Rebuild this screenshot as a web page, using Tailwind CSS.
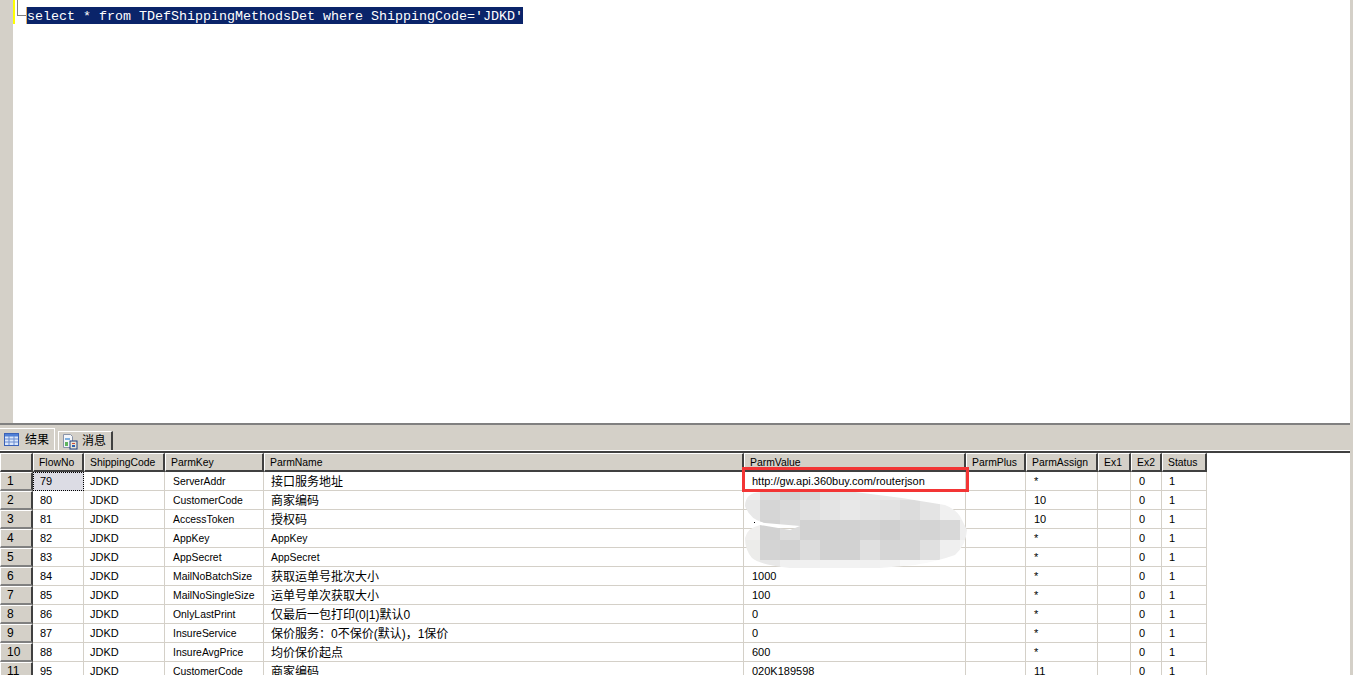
<!DOCTYPE html>
<html lang="en">
<head>
  <meta charset="UTF-8" />
  <title>Query</title>
  <script src="https://cdn.jsdelivr.net/npm/@tailwindcss/browser@4"></script>
</head>
<body class="bg-[#d4d0c8] overflow-hidden">
<div class="relative flex flex-col h-[675px] w-[1350px] bg-white overflow-hidden font-['Liberation_Sans','Noto_Sans_CJK_SC',sans-serif] text-[11px] text-black">

  <!-- Editor -->
  <div class="flex h-[423px] shrink-0">
    <div class="w-[13px] bg-[#d4d0c8] shrink-0"></div>
    <div class="w-[2px] h-[24px] bg-[#ffff00] shrink-0"></div>
    <div class="w-[2px] shrink-0"></div>
    <div class="w-[9px] h-[16px] border-l border-b border-[#808080] shrink-0"></div>
    <div class="w-px h-[17px] mt-[7px] bg-[#e8b060] shrink-0"></div>
    <div class="grow pt-[7px]">
      <div class="w-fit h-[17px] bg-[#0a246a] text-white font-['Liberation_Mono',monospace] text-[13.33px] leading-[19px] whitespace-pre overflow-hidden">select * from TDefShippingMethodsDet where ShippingCode='JDKD'</div>
    </div>
  </div>

  <!-- Tabs -->
  <div class="flex items-end h-[28px] shrink-0 gap-[3px] bg-[#d4d0c8] border-t-2 border-[#808080] border-b border-b-white">
    <div class="flex items-center gap-[6px] w-[55px] h-[22px] pl-[4px] bg-[#d4d0c8] border-t border-r border-white text-[12px] text-black">
      <svg width="15" height="13" viewBox="0 0 15 13" class="shrink-0">
        <rect x="0.5" y="0.5" width="14" height="12" fill="#dbe8fb" stroke="#3a62b8" />
        <rect x="1" y="1" width="13" height="2.5" fill="#4f7fd6" />
        <path d="M5 3v9M10 3v9M1 6h13M1 9h13" stroke="#6a8cd0" stroke-width="1" fill="none" />
      </svg>
      <span>结果</span>
    </div>
    <div class="flex items-center gap-[3px] w-[55px] h-[19px] pl-[3px] border-l border-t border-white border-r-2 border-r-[#404040] text-[12px] text-black">
      <svg width="17" height="17" viewBox="0 0 17 17" class="shrink-0">
        <path d="M1.5 1.5h7l2 2v11h-9z" fill="#f4f6fa" stroke="#8a94a8" />
        <rect x="3" y="5" width="5" height="2" fill="#7fb0e0" />
        <rect x="3" y="9" width="3" height="4" fill="#5fb45f" />
        <rect x="8" y="8" width="7" height="8" fill="#e9e4d4" stroke="#1f3f80" />
        <rect x="10" y="10" width="3" height="1" fill="#d04a3a" />
        <rect x="10" y="12" width="3" height="2" fill="#2f5fb0" />
      </svg>
      <span>消息</span>
    </div>
  </div>

  <!-- Results grid -->
  <div class="grow border-t-2 border-[#404040]" id="grid"></div>

  <!-- Red annotation around the URL -->
  <div class="absolute left-[742px] top-[467px] w-[227px] h-[25px] border-[3px] border-[#f33535]"></div>

  <!-- Mosaic over the secrets -->
  <svg class="absolute left-0 top-0" width="1350" height="675" viewBox="0 0 1350 675">
    <defs>
      <clipPath id="blob">
        <path d="M745 506Q745 493 760 492L855 492Q900 497 945 505Q958 510 962 520L967 530Q966 545 955 555Q935 562 915 565L880 568L790 568Q760 565 752 558Q745 550 745 538Q747 528 760 525L790 530L800 526L765 523Q750 520 745 506Z" />
      </clipPath>
    </defs>
    <g id="mosaic" clip-path="url(#blob)"></g>
    <rect x="754" y="522" width="1" height="1" fill="#000" />
  </svg>
</div>

<script>
const columns = ['FlowNo', 'ShippingCode', 'ParmKey', 'ParmName', 'ParmValue', 'ParmPlus', 'ParmAssign', 'Ex1', 'Ex2', 'Status'];
const rows = [
  ['79', 'JDKD', 'ServerAddr', '接口服务地址', 'http://gw.api.360buy.com/routerjson', '', '*', '', '0', '1'],
  ['80', 'JDKD', 'CustomerCode', '商家编码', '', '', '10', '', '0', '1'],
  ['81', 'JDKD', 'AccessToken', '授权码', '', '', '10', '', '0', '1'],
  ['82', 'JDKD', 'AppKey', 'AppKey', '', '', '*', '', '0', '1'],
  ['83', 'JDKD', 'AppSecret', 'AppSecret', '', '', '*', '', '0', '1'],
  ['84', 'JDKD', 'MailNoBatchSize', '获取运单号批次大小', '1000', '', '*', '', '0', '1'],
  ['85', 'JDKD', 'MailNoSingleSize', '运单号单次获取大小', '100', '', '*', '', '0', '1'],
  ['86', 'JDKD', 'OnlyLastPrint', '仅最后一包打印(0|1)默认0', '0', '', '*', '', '0', '1'],
  ['87', 'JDKD', 'InsureService', '保价服务：0不保价(默认)，1保价', '0', '', '*', '', '0', '1'],
  ['88', 'JDKD', 'InsureAvgPrice', '均价保价起点', '600', '', '*', '', '0', '1'],
  ['95', 'JDKD', 'CustomerCode', '商家编码', '020K189598', '', '11', '', '0', '1']
];

const gridCols = 'grid w-fit grid-cols-[33px_51px_81px_99px_480px_222px_60px_72px_33px_31px_45px]';
const headBtn = 'h-[19px] bg-[#d4d0c8] border-t border-l border-white border-r-2 border-b-2 border-r-[#404040] border-b-[#404040] pl-[5px] text-[10.4px] leading-[18px]';
const cellBase = 'h-[19px] border-r border-b border-[#d4d0c8] whitespace-nowrap overflow-hidden ';
// left padding per column, the reference isn't uniform
const padding = ['pl-[7px]', 'pl-[6px]', 'pl-[8px]', 'pl-[7px]', 'pl-[8px]', 'pl-[7px]', 'pl-[8px]', 'pl-[7px]', 'pl-[8px]', 'pl-[7px]'];

const textClass = (val) => {
  if (/[^\x00-\x7f]/.test(val)) return 'text-[12px] leading-[20px]';
  if (/[a-z]/.test(val) && !val.startsWith('http')) return 'text-[10.4px] leading-[20px]';
  return 'text-[11px] leading-[18px]';
};

let html = `<div class="${gridCols}"><div class="${headBtn}"></div>`;
columns.forEach(name => { html += `<div class="${headBtn}">${name}</div>`; });
rows.forEach((row, i) => {
  html += `<div class="h-[19px] bg-[#d4d0c8] border-t border-l border-white border-r-2 border-b-2 border-r-[#404040] border-b-[#808080] pl-[6px] text-[12px] leading-[16px]">${i + 1}</div>`;
  row.forEach((val, j) => {
    if (i === 0 && j === 0) {
      html += `<div class="h-[19px] bg-[#dcdce4] border border-dotted border-black pl-[6px] leading-[17px]">${val}</div>`;
    } else {
      html += `<div class="${cellBase}${padding[j]} ${textClass(val)}">${val}</div>`;
    }
  });
});
document.getElementById('grid').innerHTML = html + '</div>';

// mosaic tile greys, 20px wide from x=740
const tiles = [
  ['#ededed', '#dcdcdc', '#d2d2d2', '#d8d8d8', '#e4e4e4', '#e6e6e6', '#e6e6e6', '#e8e8e8', '#e8e8e8', '#e6e6e6', '#e6e6e6', '#f0f0f0'],
  ['#e8e8e8', '#d6d6d6', '#dadada', '#e0e0e0', '#e4e4e4', '#e8e8e8', '#e4e4e4', '#e2e2e2', '#dcdcdc', '#e4e4e4', '#f0f0f0', '#f2f2f2'],
  ['#f0efee', '#d2d2d2', '#dcdcdc', '#d2d2d2', '#d2d2d2', '#d2d2d2', '#d4d4d4', '#d0d0d0', '#d6d6d6', '#d4d4d4', '#d8d8d8', '#eeeeee'],
  ['#ececea', '#d4d4d4', '#d2d2d2', '#dcdcdc', '#d2d2d2', '#d2d2d2', '#e0e0e0', '#d6d6d6', '#d6d6d6', '#e0e0e0', '#efefef', '#f4f4f4'],
  ['#ececea', '#e8e8e8', '#f0f0f0', '#f0f0f0', '#f2f2f2', '#f2f2f2', '#f0f0f0', '#f2f2f2', '#f8f8f8', '#fafafa', '#fafafa', '#fafafa']
];
const tileY = [490, 500, 520, 540, 560];
const tileH = [10, 20, 20, 20, 10];
let svg = '';
tiles.forEach((line, r) => line.forEach((fill, c) => {
  svg += `<rect x="${740 + c * 20}" y="${tileY[r]}" width="20" height="${tileH[r]}" fill="${fill}" />`;
}));
document.getElementById('mosaic').innerHTML = svg;
</script>
</body>
</html>
